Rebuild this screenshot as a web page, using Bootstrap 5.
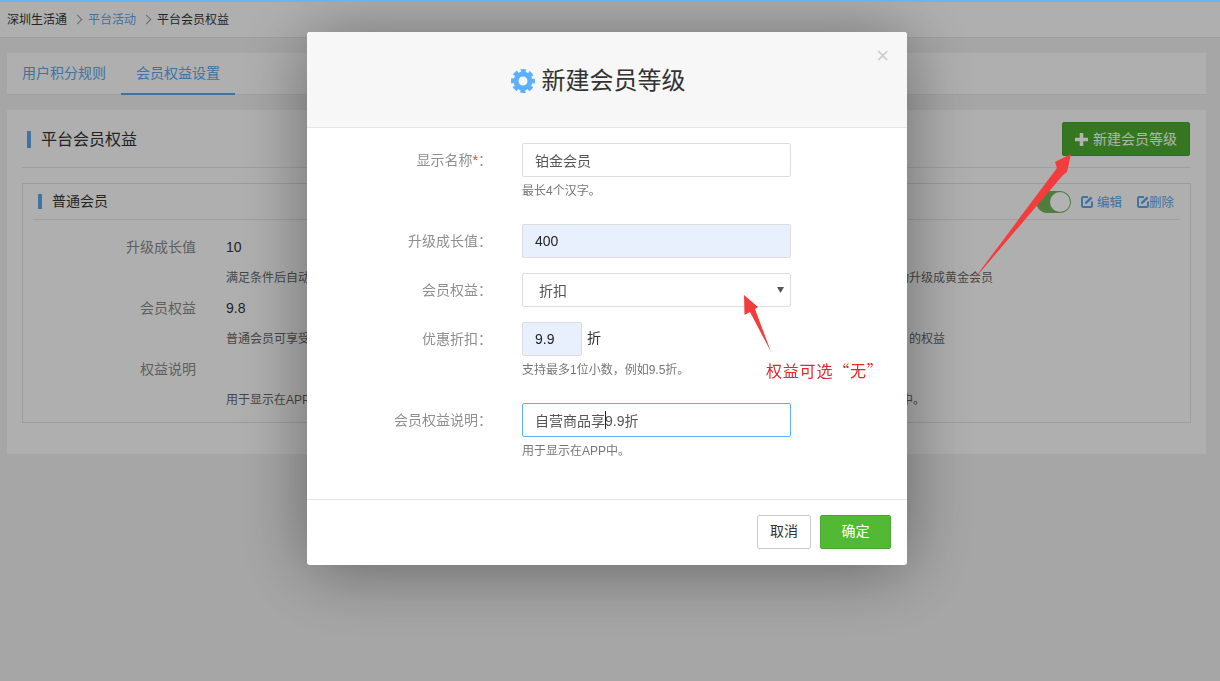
<!DOCTYPE html>
<html lang="zh">
<head>
<meta charset="utf-8">
<title>平台会员权益</title>
<link href="https://cdn.jsdelivr.net/npm/bootstrap@5.3.0/dist/css/bootstrap.min.css" rel="stylesheet">
<style>
html,body{height:100%;overflow:hidden}
body{background:#eee;font-family:"Liberation Sans","Noto Sans CJK SC",sans-serif;font-size:14px;color:#333}
.topline{height:2px;background:#64b5f6;position:relative;z-index:1060}
.crumbbar{height:36px;background:#fbfbfb;border-bottom:1px solid #e4e4e4;padding-left:7px;display:flex;align-items:center;font-size:12px}
.crumbbar .breadcrumb{margin:0}
.crumbbar .breadcrumb-item{color:#333}
.crumbbar .breadcrumb-item a{color:#5aa5e8;text-decoration:none}
.crumbbar .breadcrumb-item+.breadcrumb-item{padding-left:21px;position:relative}
.crumbbar .breadcrumb-item+.breadcrumb-item::before{content:"";position:absolute;left:7px;top:5px;width:7px;height:7px;padding:0;border-top:1px solid #999;border-right:1px solid #999;transform:rotate(45deg)}
.shell{margin:15px 14px 0 7px}
.tabcard{height:42px;background:#fbfbfb;border:0;border-bottom:1px solid #e8e8e8}
.tabcard .nav-link{height:42px;width:114px;padding:0;display:flex;align-items:center;justify-content:center;color:#5aa5e8;border-bottom:2px solid transparent;font-size:14px}
.tabcard .nav-link.active{border-bottom-color:#5aa5e8}
.panel{margin-top:15px;height:344px;background:#fbfbfb;padding:0 15px}
.panelhead{height:58px;padding:20px 5px 0;border-bottom:1px solid #e4e4e4;display:flex;justify-content:space-between;align-items:flex-start}
.paneltitle{border-left:4px solid #5aa5e8;padding-left:10px;font-size:16px;line-height:17px;height:17px;color:#333;margin:1px 0 0;font-weight:400}
.newbtn{margin:-8px -4px 0 0;width:128px;height:34px;background:#4cab30;border:1px solid #46a02c;border-radius:2px;color:#fff;font-size:14px;display:flex;align-items:center;justify-content:center;gap:5px;padding:0}
.levelbox{margin-top:15px;height:240px;border:1px solid #e0e0e0;padding:0 10px}
.levelhead{height:36px;border-bottom:1px solid #e4e4e4;display:flex;align-items:center;justify-content:space-between;padding:0 6px 0 5px}
.leveltitle{border-left:4px solid #5aa5e8;padding-left:10px;font-size:14px;line-height:15px;color:#333}
.toolset{display:flex;align-items:center;font-size:12.500px;color:#5aa5e8}
.switchy{width:35px;height:22px;border-radius:11px;background:#70b558;border:1px solid #70b558;display:flex;justify-content:flex-end;margin-right:10px}
.switchy span{width:20px;height:20px;border-radius:50%;background:#fff}
.toollink{display:flex;align-items:center;gap:4px;color:#5aa5e8;text-decoration:none;padding-top:4px}
.toollink svg{margin-top:-3px}
.toollink+.toollink{margin-left:15px}
.toollink.tight{gap:0}
.levelrows{padding-top:12px}
.levelrow{height:30.500px;display:flex;align-items:center}
.levelkey{width:152px;margin-left:11px;text-align:right;color:#888;margin-right:30px;flex:none}
.levelval{color:#333}
.levelnote{font-size:12px;color:#666;display:flex;justify-content:space-between}
.w767{width:767px}.w719{width:719px}.w699{width:699px}
#mdl{display:block;overflow:hidden}
.modal-backdrop.show{background:#000;opacity:.3!important}
#mdl .modal-dialog{width:600px;max-width:600px;margin:32px 0 0 307px}
#mdl .modal-content{height:533px;border:0;border-radius:3px;box-shadow:0 5px 70px rgba(0,0,0,.4)}
#mdl .modal-header{height:96px;background:#f7f7f7;border-bottom:1px solid #e5e5e5;justify-content:center;position:relative;padding:0;border-radius:3px 3px 0 0}
#mdl .modal-title{font-size:24px;color:#333;display:flex;align-items:center;gap:7px;font-weight:400;margin:2px 18px 0 0}
.xclose{position:absolute;right:18px;top:15px;background:none;border:0;padding:0;color:#ccc;font-size:22px;line-height:18px}
#mdl .modal-body{padding:15px 0 0;height:371px;flex:none}
.frow{display:flex;margin-bottom:15px}
.frow.tall{margin-bottom:24px}
.flabel{width:185px;text-align:right;color:#8f8f8f;line-height:34px;margin-right:30px;flex:none}
.flabel i{color:#f33;font-style:normal}
.fctl{width:269px;flex:none;position:relative}
.fctl .form-control,.fctl .form-select{height:34px;border:1px solid #ddd;border-radius:2px;padding:0 12px;color:#555;font-size:14px;box-shadow:none}
.fctl .auto{background:#e8f0fe;color:#222}
.fctl .form-select{padding:2px 0 0 16px;background-image:url("data:image/svg+xml,%3Csvg xmlns='http://www.w3.org/2000/svg' width='7' height='6'%3E%3Cpath d='M0 0h7L3.500 6z' fill='%23555'/%3E%3C/svg%3E");background-size:7px 6px;background-position:right 6px center}
.fctl .focused{border-color:#5cb0ff;color:#555}
.narrow{width:60px!important;display:inline-block}
.unit{margin-left:5px;color:#333;vertical-align:1px}
.fhelp{font-size:12px;line-height:18px;margin-top:5px;color:#777}
.caretbar{position:absolute;left:83px;top:8px;width:1px;height:18px;background:#222}
#mdl .modal-footer{height:66px;padding:0 16px 2px;border-top:1px solid #e5e5e5;justify-content:flex-end;gap:9px;flex-wrap:nowrap}
#mdl .modal-footer .btn{margin:0;height:34px;border-radius:2px;font-size:14px;padding:0}
.cancelb{width:54px;background:#fff;border:1px solid #ccc;color:#333}
.okb{width:71px;background:#52b935;border:1px solid #4aa830;color:#fff}
.annot{position:absolute;left:0;top:0;z-index:1060;pointer-events:none}
.annotext{position:absolute;left:766px;top:359px;z-index:1060;color:#e5282c;font-family:"Noto Sans CJK SC",sans-serif;font-size:16px;line-height:22px;letter-spacing:.8px;white-space:nowrap}
</style>
</head>
<body>
<div class="topline"></div>
<div class="crumbbar">
  <ol class="breadcrumb">
    <li class="breadcrumb-item">深圳生活通</li>
    <li class="breadcrumb-item"><a href="#">平台活动</a></li>
    <li class="breadcrumb-item active">平台会员权益</li>
  </ol>
</div>
<div class="shell">
  <ul class="nav tabcard">
    <li class="nav-item"><a class="nav-link" href="#">用户积分规则</a></li>
    <li class="nav-item"><a class="nav-link active" href="#">会员权益设置</a></li>
  </ul>
  <div class="panel">
    <div class="panelhead">
      <h2 class="paneltitle">平台会员权益</h2>
      <button class="btn newbtn" type="button">
        <svg width="13" height="13" viewBox="0 0 13 13"><path d="M4.700 0h3.600v4.700H13v3.600H8.300V13H4.700V8.300H0V4.700h4.700z" fill="#fff"/></svg>
        新建会员等级
      </button>
    </div>
    <div class="levelbox">
      <div class="levelhead">
        <div class="leveltitle">普通会员</div>
        <div class="toolset">
          <div class="switchy"><span></span></div>
          <a class="toollink" href="#"><svg width="12" height="12" viewBox="0 0 12 12"><path d="M7 1H2.200C1.500 1 1 1.500 1 2.200v7.600c0 .7.5 1.200 1.200 1.200h7.600c.7 0 1.200-.5 1.200-1.200V5.500" fill="none" stroke="#5aa5e8" stroke-width="2"/><path d="M3.800 8.200l.6-2.400L9.700.5l1.800 1.800-5.300 5.300z" fill="#5aa5e8"/></svg>编辑</a>
          <a class="toollink tight" href="#"><svg width="12" height="12" viewBox="0 0 12 12"><path d="M7 1H2.200C1.500 1 1 1.500 1 2.200v7.600c0 .7.5 1.200 1.200 1.200h7.600c.7 0 1.200-.5 1.200-1.200V5.500" fill="none" stroke="#5aa5e8" stroke-width="2"/><path d="M3.800 8.200l.6-2.400L9.700.5l1.800 1.800-5.300 5.300z" fill="#5aa5e8"/></svg>删除</a>
        </div>
      </div>
      <div class="levelrows">
        <div class="levelrow"><div class="levelkey">升级成长值</div><div class="levelval">10</div></div>
        <div class="levelrow"><div class="levelkey"></div><div class="levelnote w767"><span>满足条件后自动</span><span>动升级成黄金会员</span></div></div>
        <div class="levelrow"><div class="levelkey">会员权益</div><div class="levelval">9.8</div></div>
        <div class="levelrow"><div class="levelkey"></div><div class="levelnote w719"><span>普通会员可享受</span><span>的权益</span></div></div>
        <div class="levelrow"><div class="levelkey">权益说明</div></div>
        <div class="levelrow"><div class="levelkey"></div><div class="levelnote w699"><span>用于显示在APP</span><span>中。</span></div></div>
      </div>
    </div>
  </div>
</div>

<div class="modal-backdrop show"></div>
<div class="modal" id="mdl">
  <div class="modal-dialog">
    <div class="modal-content">
      <div class="modal-header">
        <h5 class="modal-title">
          <svg width="24" height="24" viewBox="0 0 24 24"><circle cx="12" cy="12" r="7" fill="none" stroke="#5cb0ff" stroke-width="5"/><circle cx="12" cy="12" r="10.200" fill="none" stroke="#5cb0ff" stroke-width="3.600" stroke-dasharray="5 3.010" stroke-dashoffset="2.500"/></svg>
          新建会员等级
        </h5>
        <button class="xclose" type="button">×</button>
      </div>
      <div class="modal-body">
        <div class="frow tall">
          <div class="flabel">显示名称<i>*</i>：</div>
          <div class="fctl"><input class="form-control" value="铂金会员"><div class="fhelp">最长4个汉字。</div></div>
        </div>
        <div class="frow">
          <div class="flabel">升级成长值：</div>
          <div class="fctl"><input class="form-control auto" value="400"></div>
        </div>
        <div class="frow">
          <div class="flabel">会员权益：</div>
          <div class="fctl"><select class="form-select"><option>折扣</option></select></div>
        </div>
        <div class="frow tall">
          <div class="flabel">优惠折扣：</div>
          <div class="fctl"><input class="form-control auto narrow" value="9.9"><span class="unit">折</span><div class="fhelp">支持最多1位小数，例如9.5折。</div></div>
        </div>
        <div class="frow">
          <div class="flabel">会员权益说明：</div>
          <div class="fctl"><input class="form-control focused" value="自营商品享9.9折"><span class="caretbar"></span><div class="fhelp">用于显示在APP中。</div></div>
        </div>
      </div>
      <div class="modal-footer">
        <button class="btn cancelb" type="button">取消</button>
        <button class="btn okb" type="button">确定</button>
      </div>
    </div>
  </div>
</div>

<svg class="annot" width="1220" height="681" viewBox="0 0 1220 681">
  <path d="M971 283L1057 168L1055 162L1071 154L1067 172L1063 175Z" fill="#f33c3c"/>
  <path d="M771 352L750 312L744.500 315L744 295L758 307L755 309Z" fill="#f33c3c"/>
</svg>
<div class="annotext">权益可选“无”</div>
<script src="https://cdn.jsdelivr.net/npm/bootstrap@5.3.0/dist/js/bootstrap.bundle.min.js"></script>
</body>
</html>
